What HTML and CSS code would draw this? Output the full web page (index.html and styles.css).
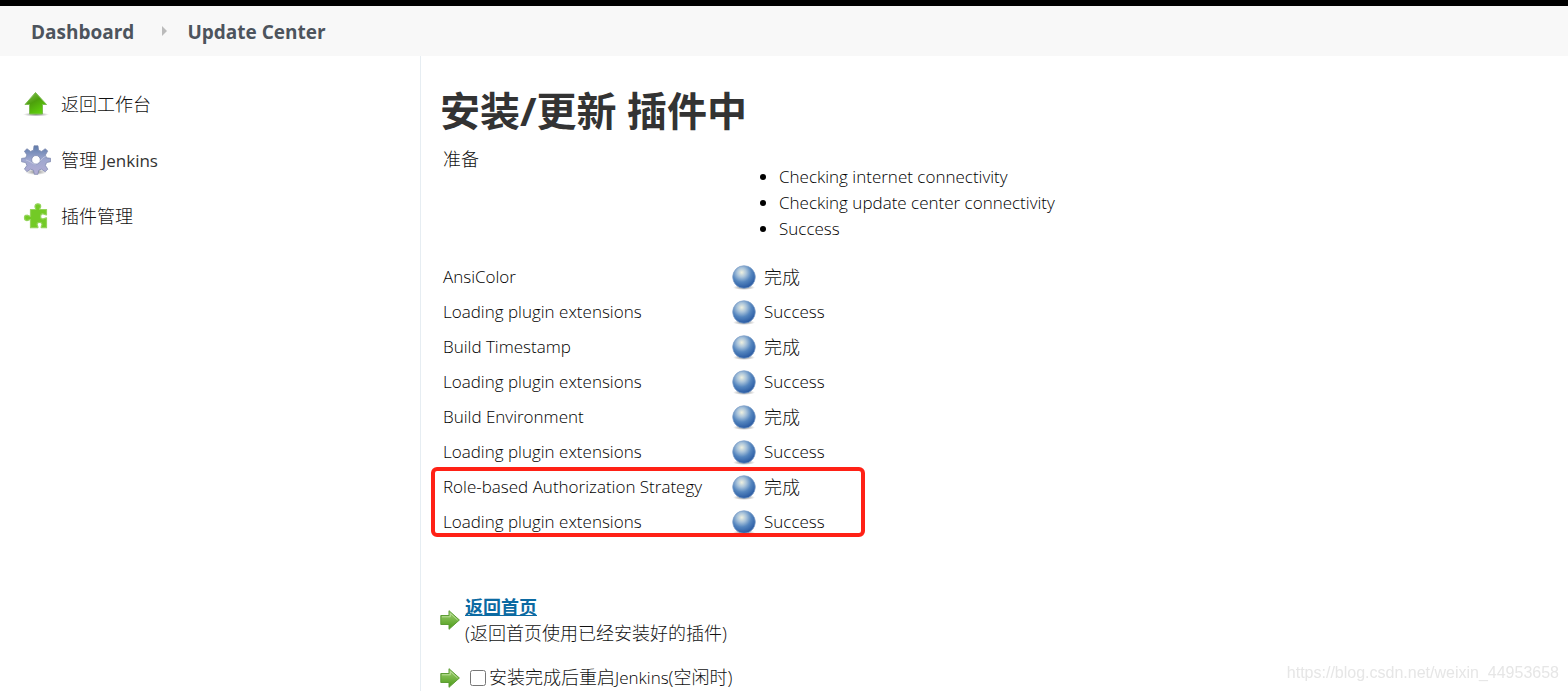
FILE: index.html
```html
<!DOCTYPE html>
<html lang="zh-CN">
<head>
<meta charset="utf-8">
<title>Update Center</title>
<link rel="stylesheet" href="styles.css">
</head>
<body>
<svg class="defs" aria-hidden="true">
  <defs>
    <radialGradient id="ballFill" cx="40%" cy="30%" r="68%">
      <stop offset="0" stop-color="#eef0e0"/>
      <stop offset=".3" stop-color="#a9c3da"/>
      <stop offset=".62" stop-color="#5586bf"/>
      <stop offset="1" stop-color="#2c5da4"/>
    </radialGradient>
    <radialGradient id="shade">
      <stop offset="0" stop-color="#555" stop-opacity=".7"/>
      <stop offset="1" stop-color="#555" stop-opacity="0"/>
    </radialGradient>
    <linearGradient id="upFill" x1="0" y1="0" x2=".6" y2="1">
      <stop offset="0" stop-color="#8cc55c"/>
      <stop offset=".5" stop-color="#4da00c"/>
      <stop offset="1" stop-color="#5fcf0c"/>
    </linearGradient>
    <linearGradient id="gearFill" x1="0" y1="0" x2="0" y2="1">
      <stop offset="0" stop-color="#5d7bab"/>
      <stop offset=".5" stop-color="#a0a8cf"/>
      <stop offset="1" stop-color="#b3add4"/>
    </linearGradient>
    <linearGradient id="rightFill" x1="0" y1="0" x2="0" y2="1">
      <stop offset="0" stop-color="#a3d276"/>
      <stop offset="1" stop-color="#4a9a16"/>
    </linearGradient>
    <symbol id="ball" viewBox="0 0 24 26">
      <ellipse cx="12" cy="23.500" rx="11" ry="2.500" fill="url(#shade)"/>
      <circle cx="12" cy="13" r="11.300" fill="url(#ballFill)" stroke="#7e9fc8" stroke-width=".7"/>
    </symbol>
    <symbol id="up" viewBox="0 0 30 30">
      <ellipse cx="15" cy="25.500" rx="13" ry="2" fill="url(#shade)"/>
      <path d="M14.500 3.500 25.500 15.500H21.500V25H8.500V15.500H4Z" fill="url(#upFill)" stroke="#7dbc52" stroke-linejoin="round"/>
    </symbol>
    <symbol id="gear" viewBox="0 0 30 30">
      <ellipse cx="15" cy="27" rx="11" ry="3" fill="url(#shade)"/>
      <g fill="url(#gearFill)" stroke="#7783a9" stroke-width=".7" stroke-linejoin="round">
        <path fill-rule="evenodd" d="M13 .8h4l.6 4.400 3 1.200 3.700-2.700 2.400 2.400-2.300 3.900 1.200 2.800 4 .5v3.400l-4 .8-1.200 3 2.400 3.700-2.600 2.500-3.700-2.500-2.800 1.200-.8 3.900h-3.600l-.8-3.900-2.900-1.200-3.600 2.400-2.600-2.500 2.500-3.600-1.200-2.900-4.100-.8v-3.400l4.100-.6 1.200-2.900L3.400 6.200 6 3.700l3.500 2.700 2.900-1.200ZM15 10.500a4.300 4.300 0 1 0 0 8.600 4.300 4.300 0 1 0 0-8.600Z"/>
      </g>
      <path d="M5 15c4 1 8 5 10 4 5-2 5-6 10-8" fill="none" stroke="#dfe1f1" stroke-width=".8" opacity=".6"/>
    </symbol>
    <symbol id="puzzle" viewBox="0 0 30 30">
      <path d="M9.500 8.500h5.200c.3-1.200-.9-1.700-.7-3.300C14.300 2 19.600 2 19.700 5.200c0 1.500-1.200 2-1 3.300h6.800v5.300c-2 .2-2.300-1.100-4-1-2.500.3-2.500 4.900 0 5.100 1.600.2 2-1.100 4-1v9.800h-5.300c-.3-1.700.9-2 .8-3.500-.3-2.400-4.700-2.400-4.900 0-.1 1.500 1.100 1.900.8 3.500H9.500v-8.200c-1.600 0-2 1.200-3.700 1.100-3.100-.2-3.100-5.300 0-5.400 1.700-.1 2 1.100 3.700 1Z" fill="#73ca26" stroke="#94d45a" stroke-width="1.200" stroke-linejoin="round"/>
    </symbol>
    <symbol id="right" viewBox="0 0 20 20">
      <path d="M.8 5.500H9V.7L19.400 10 9 19.300V14.500H.8Z" fill="url(#rightFill)" stroke="#5d9d35" stroke-linejoin="round"/>
      <path d="M2 6.800H10.300V3.300L17.600 10" fill="none" stroke="#b9dd98"/>
    </symbol>
  </defs>
</svg>

<header>
  <div class="topbar"></div>
  <nav class="breadcrumbs">
    <a href="#">Dashboard</a>
    <span class="separator"></span>
    <a href="#">Update Center</a>
  </nav>
</header>

<div class="page">
  <nav class="side">
    <a class="task" href="#"><svg class="task-icon"><use href="#up"/></svg>返回工作台</a>
    <a class="task" href="#"><svg class="task-icon"><use href="#gear"/></svg><span>管理 <span class="product">Jenkins</span></span></a>
    <a class="task" href="#"><svg class="task-icon"><use href="#puzzle"/></svg>插件管理</a>
  </nav>

  <main class="main">
    <h1>安装/更新 插件中</h1>
    <div class="jobs">
      <table>
        <tbody>
          <tr class="prepare"><td class="name">准备</td><td><ul class="latin"><li>Checking internet connectivity</li><li>Checking update center connectivity</li><li>Success</li></ul></td></tr>
          <tr><td class="name latin">AnsiColor</td><td><div class="status"><svg class="ball"><use href="#ball"/></svg>完成</div></td></tr>
          <tr><td class="name latin">Loading plugin extensions</td><td><div class="status latin"><svg class="ball"><use href="#ball"/></svg>Success</div></td></tr>
          <tr><td class="name latin">Build Timestamp</td><td><div class="status"><svg class="ball"><use href="#ball"/></svg>完成</div></td></tr>
          <tr><td class="name latin">Loading plugin extensions</td><td><div class="status latin"><svg class="ball"><use href="#ball"/></svg>Success</div></td></tr>
          <tr><td class="name latin">Build Environment</td><td><div class="status"><svg class="ball"><use href="#ball"/></svg>完成</div></td></tr>
          <tr><td class="name latin">Loading plugin extensions</td><td><div class="status latin"><svg class="ball"><use href="#ball"/></svg>Success</div></td></tr>
          <tr><td class="name latin">Role-based Authorization Strategy</td><td><div class="status"><svg class="ball"><use href="#ball"/></svg>完成</div></td></tr>
          <tr><td class="name latin">Loading plugin extensions</td><td><div class="status latin"><svg class="ball"><use href="#ball"/></svg>Success</div></td></tr>
        </tbody>
      </table>
      <div class="highlight"></div>
    </div>

    <div class="action">
      <svg class="arrow"><use href="#right"/></svg>
      <div><a class="home" href="#">返回首页</a><div>(返回首页使用已经安装好的插件)</div></div>
    </div>
    <div class="action">
      <svg class="arrow"><use href="#right"/></svg>
      <div class="restart"><input type="checkbox" id="restart"><label for="restart">安装完成后重启<span class="latin">Jenkins</span>(空闲时)</label></div>
    </div>
  </main>
</div>
<div class="watermark">https://blog.csdn.net/weixin_44953658</div>
</body>
</html>
```
FILE: styles.css
```css
* { box-sizing: border-box; }

body {
  margin: 0;
  min-height: 100vh;
  display: flex;
  flex-direction: column;
  background: #fff;
  color: #111;
  font: 300 18px/26px "Open Sans", "Noto Sans CJK SC", sans-serif;
}

.defs { position: absolute; width: 0; height: 0; }
svg { flex: none; display: block; }
.latin { font-size: 17px; color: #000; }

.topbar { height: 6px; background: #000; }

.breadcrumbs {
  display: flex;
  align-items: center;
  height: 50px;
  padding: 2px 31px 0;
  background: #f8f8f8;
  font-size: 19px;
  font-weight: 700;
}
.breadcrumbs a { color: #4d545d; text-decoration: none; }
.separator {
  margin: 0 20px 2px 28px;
  border: 5px solid transparent;
  border-left-color: #bbb;
  border-right-width: 0;
}

.page { flex: 1; display: flex; }

.side {
  flex: none;
  display: flex;
  flex-direction: column;
  gap: 26px;
  width: 421px;
  padding: 33px 21px;
  border-right: 1px solid #e6edf2;
}
.task {
  display: flex;
  align-items: center;
  gap: 10px;
  color: #111;
  text-decoration: none;
}
.task-icon { width: 30px; height: 30px; }
.product { color: #333; font-size: 17px; font-weight: 500; }

.main { flex: 1; padding: 30px 19px 0; }

h1 {
  margin: 0;
  color: #333;
  font-size: 40px;
  line-height: 50px;
  font-weight: 700;
}

.jobs { position: relative; width: fit-content; margin: 10px 0 54px; }
table { border-collapse: collapse; }
td { height: 35px; padding: 0 0 2px; }
.name { width: 292px; padding: 0 20px 2px 3px; }
.prepare td { padding-bottom: 0; vertical-align: top; }
ul { margin: 18px 0; padding-left: 47px; }
.status { display: flex; align-items: center; gap: 8px; }
.ball { width: 24px; height: 26px; }

.highlight {
  position: absolute;
  bottom: 3px;
  left: -9px;
  width: 434px;
  height: 70px;
  border: 4px solid #ff2116;
  border-radius: 6px;
}

.action { display: flex; align-items: center; gap: 5px; margin-bottom: 18px; }
.arrow { width: 20px; height: 20px; }
.home { color: #0b6aa2; font-weight: 700; }
.restart { display: flex; align-items: center; gap: 3px; padding-left: 5px; }
.restart input { width: 16px; height: 16px; margin: 0; }
.main .action:last-child { margin-bottom: 0; }

.watermark {
  position: fixed;
  right: 9px;
  bottom: 6px;
  color: #e6e6e6;
  font: 16px/24px "Liberation Sans", sans-serif;
}
```
